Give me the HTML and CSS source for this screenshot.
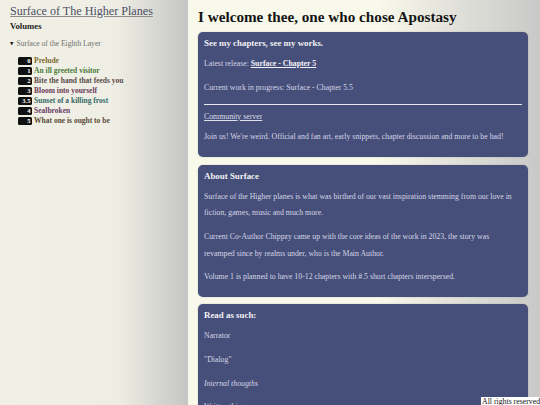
FILE: index.html
```html
<!DOCTYPE html>
<html lang="en">
<head>
<meta charset="utf-8">
<title>Surface of The Higher Planes</title>
<link rel="stylesheet" href="styles.css">
</head>
<body>
<aside class="sidebar">
  <a class="site-title" href="#">Surface of The Higher Planes</a>
  <h2 class="vol-head">Volumes</h2>
  <div class="volume"><span class="marker">▼</span>Surface of the Eighth Layer</div>
  <ul class="chapters">
    <li class="ch"><span class="num">0</span><a class="t c0" href="#">Prelude</a></li>
    <li class="ch"><span class="num">1</span><a class="t c1" href="#">An ill greeted visitor</a></li>
    <li class="ch"><span class="num">2</span><a class="t c2" href="#">Bite the hand that feeds you</a></li>
    <li class="ch"><span class="num">3</span><a class="t c3" href="#">Bloom into yourself</a></li>
    <li class="ch"><span class="num">3.5</span><a class="t c4" href="#">Sunset of a killing frost</a></li>
    <li class="ch"><span class="num">4</span><a class="t c5" href="#">Sealbroken</a></li>
    <li class="ch"><span class="num">5</span><a class="t c6" href="#">What one is ought to be</a></li>
  </ul>
</aside>
<main class="content">
  <h1 class="welcome">I welcome thee, one who chose Apostasy</h1>
  <section class="card card-works">
    <h3 class="card-head">See my chapters, see my works.</h3>
    <p class="txt">Latest release: <a class="strong-link" href="#">Surface - Chapter 5</a></p>
    <p class="txt">Current work in progress: Surface - Chapter 5.5</p>
    <hr class="rule">
    <p class="txt community"><a class="plain-link" href="#">Community server</a></p>
    <p class="txt join">Join us! We're weird. Official and fan art, early snippets, chapter discussion and more to be had!</p>
  </section>
  <section class="card card-about">
    <h3 class="card-head">About Surface</h3>
    <p class="txt">Surface of the Higher planes is what was birthed of our vast inspiration stemming from our love in fiction, games, music and much more.</p>
    <p class="txt">Current Co-Author Chippzy came up with the core ideas of the work in 2023, the story was revamped since by realms under, who is the Main Author.</p>
    <p class="txt">Volume 1 is planned to have 10-12 chapters with #.5 short chapters interspersed.</p>
  </section>
  <section class="card card-read">
    <h3 class="card-head">Read as such:</h3>
    <p class="txt">Narrator</p>
    <p class="txt">"Dialog"</p>
    <p class="txt"><em>Internal thougths</em></p>
    <p class="txt">Written things</p>
  </section>
</main>
<footer class="rights">All rights reserved</footer>
</body>
</html>
```
FILE: styles.css
```css
html, body {
  margin: 0;
  padding: 0;
  height: 100%;
  overflow: hidden;
}
body {
  display: flex;
  font-family: "Liberation Serif", "Times New Roman", serif;
  background: #c9c9c9;
}
.sidebar {
  width: 188px;
  flex: none;
  box-sizing: border-box;
  padding: 4px 0 0 10px;
  background: linear-gradient(90deg, #f1f0e6 0%, #efeee4 62%, #c5c5c4 100%);
  min-height: 100%;
}
.site-title {
  display: block;
  font-size: 12.1px;
  line-height: 14px;
  color: #4c4f66;
  text-decoration: underline;
  text-decoration-color: #8c8c8c;
  text-underline-offset: 1px;
  white-space: nowrap;
}
.vol-head {
  margin: 2.5px 0 0;
  font-size: 8.7px;
  line-height: 11px;
  font-weight: bold;
  color: #1d1d1d;
}
.volume {
  margin-top: 7px;
  font-size: 7.6px;
  line-height: 10px;
  color: #6f6f6f;
  display: flex;
  align-items: center;
}
.marker {
  font-family: "DejaVu Sans", sans-serif;
  font-size: 4.5px;
  color: #222;
  margin-right: 3px;
}
.chapters {
  list-style: none;
  margin: 7.4px 0 0;
  padding: 0 0 0 8px;
}
.ch {
  display: flex;
  align-items: center;
  height: 10px;
}
.num {
  width: 13.5px;
  height: 7.6px;
  box-sizing: border-box;
  background: #111;
  color: #fff;
  border-radius: 1.5px;
  font-size: 6.6px;
  line-height: 7.6px;
  font-weight: bold;
  text-align: right;
  padding-right: 1px;
  margin-right: 2.6px;
}
.t {
  font-size: 7.5px;
  font-weight: bold;
  text-decoration: none;
  white-space: nowrap;
}
.c0 { color: #7b6a2c; }
.c1 { color: #4b7a3a; }
.c2 { color: #5a4b4b; }
.c3 { color: #6b3a57; }
.c4 { color: #376a68; }
.c5 { color: #673c67; }
.c6 { color: #5a4b36; }

.content {
  flex: 1;
  min-width: 0;
  box-sizing: border-box;
  padding: 6.7px 12px 0 10px;
  background: linear-gradient(90deg, #f8f8eb 0%, #f8f8eb 54%, #c8c8c8 100%);
}
.welcome {
  margin: 0 0 5.3px;
  font-size: 15.2px;
  line-height: 20px;
  font-weight: bold;
  color: #151515;
  white-space: nowrap;
}
.card {
  background: #464e7a;
  border-radius: 5px;
  padding: 6px 9px 12px 6px;
  margin-bottom: 7.4px;
  color: #d5d7e6;
  box-shadow: 0 0 1.5px rgba(0, 0, 0, 0.25);
}
.card-about {
  padding-bottom: 11.3px;
}
.card-head {
  margin: 0;
  font-size: 8.9px;
  line-height: 11px;
  font-weight: bold;
  color: #f1f1f4;
}
.txt {
  margin: 7px 0 0;
  font-size: 7.8px;
  line-height: 16.6px;
}
.strong-link {
  color: #f3f3f6;
  font-weight: bold;
  text-decoration: underline;
}
.plain-link {
  color: #dcdeea;
  text-decoration: underline;
}
.rule {
  margin: 7.5px -3px 0 0;
  border: 0;
  border-top: 1px solid #e8e9f0;
  height: 0;
}
.community {
  margin-top: 4.2px;
}
.join {
  margin-top: 3.4px;
}
.rights {
  position: fixed;
  top: 397px;
  left: 481px;
  background: #fff;
  color: #111;
  font-size: 7.8px;
  line-height: 9px;
  padding: 0 1px 0 1px;
  white-space: nowrap;
}
```
